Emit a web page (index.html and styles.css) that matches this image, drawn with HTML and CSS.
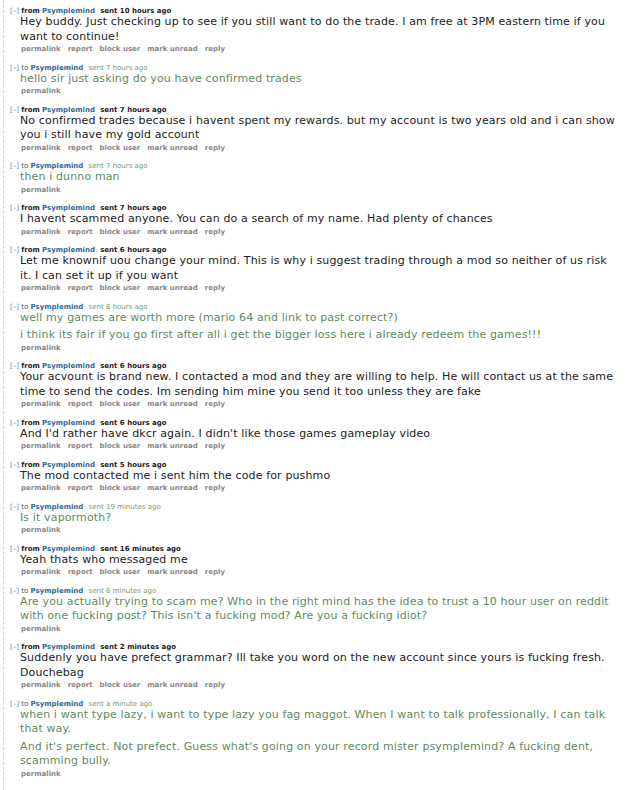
FILE: index.html
```html
<!DOCTYPE html>
<html lang="en">
<head>
  <meta charset="UTF-8">
  <title>messages: Psymplemind</title>
  <link rel="stylesheet" href="styles.css">
</head>
<body>
<div class="thread">

  <div class="message inbox">
    <p class="tagline"><span class="expand">[–]</span> <span class="dir">from</span> <span class="author">Psymplemind</span> <span class="time">sent 10 hours ago</span></p>
    <div class="md"><p>Hey buddy. Just checking up to see if you still want to do the trade. I am free at 3PM eastern time if you want to continue!</p></div>
    <ul class="buttons"><li>permalink</li><li>report</li><li>block user</li><li>mark unread</li><li>reply</li></ul>
  </div>

  <div class="message sent">
    <p class="tagline"><span class="expand">[–]</span> <span class="dir">to</span> <span class="author">Psymplemind</span> <span class="time">sent 7 hours ago</span></p>
    <div class="md"><p>hello sir just asking do you have confirmed trades</p></div>
    <ul class="buttons"><li>permalink</li></ul>
  </div>

  <div class="message inbox">
    <p class="tagline"><span class="expand">[–]</span> <span class="dir">from</span> <span class="author">Psymplemind</span> <span class="time">sent 7 hours ago</span></p>
    <div class="md"><p>No confirmed trades because i havent spent my rewards. but my account is two years old and i can show you i still have my gold account</p></div>
    <ul class="buttons"><li>permalink</li><li>report</li><li>block user</li><li>mark unread</li><li>reply</li></ul>
  </div>

  <div class="message sent">
    <p class="tagline"><span class="expand">[–]</span> <span class="dir">to</span> <span class="author">Psymplemind</span> <span class="time">sent 7 hours ago</span></p>
    <div class="md"><p>then i dunno man</p></div>
    <ul class="buttons"><li>permalink</li></ul>
  </div>

  <div class="message inbox">
    <p class="tagline"><span class="expand">[–]</span> <span class="dir">from</span> <span class="author">Psymplemind</span> <span class="time">sent 7 hours ago</span></p>
    <div class="md"><p>I havent scammed anyone. You can do a search of my name. Had plenty of chances</p></div>
    <ul class="buttons"><li>permalink</li><li>report</li><li>block user</li><li>mark unread</li><li>reply</li></ul>
  </div>

  <div class="message inbox">
    <p class="tagline"><span class="expand">[–]</span> <span class="dir">from</span> <span class="author">Psymplemind</span> <span class="time">sent 6 hours ago</span></p>
    <div class="md"><p>Let me knownif uou change your mind. This is why i suggest trading through a mod so neither of us risk it. I can set it up if you want</p></div>
    <ul class="buttons"><li>permalink</li><li>report</li><li>block user</li><li>mark unread</li><li>reply</li></ul>
  </div>

  <div class="message sent">
    <p class="tagline"><span class="expand">[–]</span> <span class="dir">to</span> <span class="author">Psymplemind</span> <span class="time">sent 6 hours ago</span></p>
    <div class="md">
      <p>well my games are worth more (mario 64 and link to past correct?)</p>
      <p>i think its fair if you go first after all i get the bigger loss here i already redeem the games!!!</p>
    </div>
    <ul class="buttons"><li>permalink</li></ul>
  </div>

  <div class="message inbox">
    <p class="tagline"><span class="expand">[–]</span> <span class="dir">from</span> <span class="author">Psymplemind</span> <span class="time">sent 6 hours ago</span></p>
    <div class="md"><p>Your acvount is brand new. I contacted a mod and they are willing to help. He will contact us at the same time to send the codes. Im sending him mine you send it too unless they are fake</p></div>
    <ul class="buttons"><li>permalink</li><li>report</li><li>block user</li><li>mark unread</li><li>reply</li></ul>
  </div>

  <div class="message inbox">
    <p class="tagline"><span class="expand">[–]</span> <span class="dir">from</span> <span class="author">Psymplemind</span> <span class="time">sent 6 hours ago</span></p>
    <div class="md"><p>And I'd rather have dkcr again. I didn't like those games gameplay video</p></div>
    <ul class="buttons"><li>permalink</li><li>report</li><li>block user</li><li>mark unread</li><li>reply</li></ul>
  </div>

  <div class="message inbox">
    <p class="tagline"><span class="expand">[–]</span> <span class="dir">from</span> <span class="author">Psymplemind</span> <span class="time">sent 5 hours ago</span></p>
    <div class="md"><p>The mod contacted me i sent him the code for pushmo</p></div>
    <ul class="buttons"><li>permalink</li><li>report</li><li>block user</li><li>mark unread</li><li>reply</li></ul>
  </div>

  <div class="message sent">
    <p class="tagline"><span class="expand">[–]</span> <span class="dir">to</span> <span class="author">Psymplemind</span> <span class="time">sent 19 minutes ago</span></p>
    <div class="md"><p>Is it vapormoth?</p></div>
    <ul class="buttons"><li>permalink</li></ul>
  </div>

  <div class="message inbox">
    <p class="tagline"><span class="expand">[–]</span> <span class="dir">from</span> <span class="author">Psymplemind</span> <span class="time">sent 16 minutes ago</span></p>
    <div class="md"><p>Yeah thats who messaged me</p></div>
    <ul class="buttons"><li>permalink</li><li>report</li><li>block user</li><li>mark unread</li><li>reply</li></ul>
  </div>

  <div class="message sent">
    <p class="tagline"><span class="expand">[–]</span> <span class="dir">to</span> <span class="author">Psymplemind</span> <span class="time">sent 6 minutes ago</span></p>
    <div class="md"><p>Are you actually trying to scam me? Who in the right mind has the idea to trust a 10 hour user on reddit with one fucking post? This isn't a fucking mod? Are you a fucking idiot?</p></div>
    <ul class="buttons"><li>permalink</li></ul>
  </div>

  <div class="message inbox">
    <p class="tagline"><span class="expand">[–]</span> <span class="dir">from</span> <span class="author">Psymplemind</span> <span class="time">sent 2 minutes ago</span></p>
    <div class="md"><p>Suddenly you have prefect grammar? Ill take you word on the new account since yours is fucking fresh. Douchebag</p></div>
    <ul class="buttons"><li>permalink</li><li>report</li><li>block user</li><li>mark unread</li><li>reply</li></ul>
  </div>

  <div class="message sent">
    <p class="tagline"><span class="expand">[–]</span> <span class="dir">to</span> <span class="author">Psymplemind</span> <span class="time">sent a minute ago</span></p>
    <div class="md">
      <p>when i want type lazy, i want to type lazy you fag maggot. When I want to talk professionally, I can talk that way.</p>
      <p>And it's perfect. Not prefect. Guess what's going on your record mister psymplemind? A fucking dent, scamming bully.</p>
    </div>
    <ul class="buttons"><li>permalink</li></ul>
  </div>

</div>
</body>
</html>
```

FILE: styles.css
```css
body { margin: 0; background: #fff; font-family: "DejaVu Sans", Verdana, sans-serif; color: #222; }
.thread { margin-left: 3px; border-left: 1px dashed #d4d4d4; padding: 7px 8px 12px 6px; min-height: 770px; }
.message { margin-bottom: 8.5px; }
.tagline { margin: 0; font-size: 7px; line-height: 8px; color: #888; }
.tagline .expand { color: #6a7fa0; }
.tagline .author { color: #336699; font-weight: bold; }
.tagline .time { margin-left: 3px; }
.inbox .dir, .inbox .time { color: #222; font-weight: bold; }
.sent .dir { color: #555; }
.sent .time { color: #7a9a6a; }
.md { padding-left: 10px; font-size: 11px; letter-spacing: 0.13px; line-height: 14.5px; }
.md p { margin: 0; }
.md p + p { margin-top: 3px; }
.sent .md { color: #5f8a5f; }
.buttons { list-style: none; margin: 0; padding: 0 0 0 11px; display: flex; gap: 7px; font-size: 7px; line-height: 11px; font-weight: bold; color: #888; }
```
